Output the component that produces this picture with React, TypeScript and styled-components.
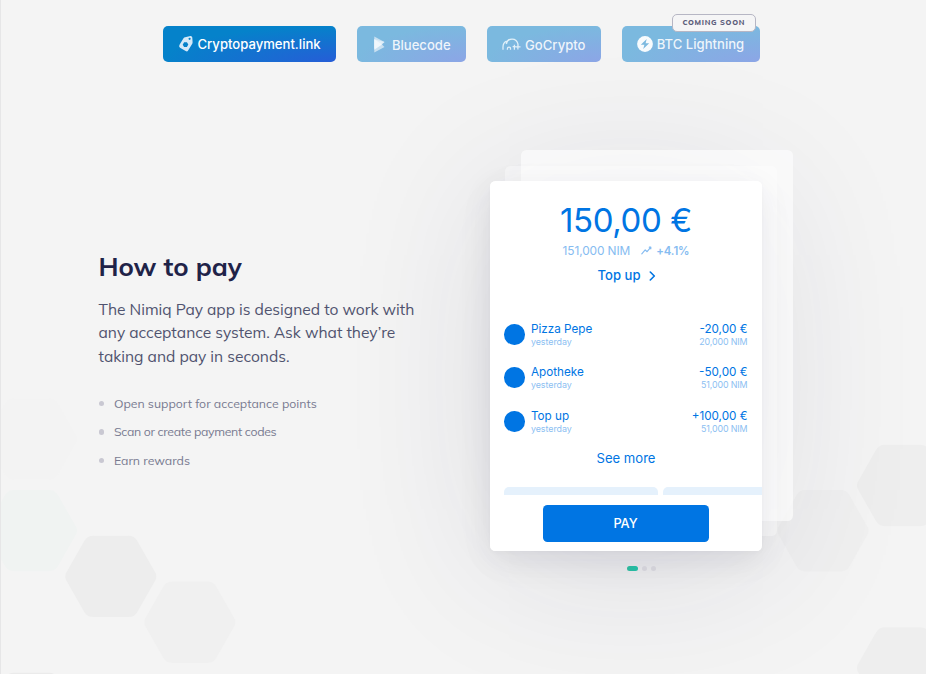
import React from 'react';
import styled, { createGlobalStyle, css } from 'styled-components';

const GlobalStyle = createGlobalStyle`
  *, *::before, *::after { box-sizing: border-box; }
  body { margin: 0; background: #f4f4f4; }
  h1, p, ul { margin: 0; padding: 0; }
  button { border: 0; padding: 0; font-family: inherit; background: none; }
`;

const Page = styled.div`
  position: relative;
  width: 926px;
  height: 674px;
  overflow: hidden;
  border-left: 1px solid #e6e6e7;
  background: #f4f4f4;
  font-family: Inter, sans-serif;
`;

const Backdrop = styled.svg`
  position: absolute;
  inset: 0 auto auto -1px;
  pointer-events: none;
`;

const MethodBar = styled.nav`
  position: relative;
  z-index: 1;
  display: flex;
  gap: 20.7px;
  padding: 25.7px 0 0 161.5px;
`;

const Method = styled.button<{ $width: number; $active?: boolean; $inset?: number; $lift?: number }>`
  position: relative;
  display: flex;
  flex: none;
  align-items: center;
  width: ${p => p.$width}px;
  height: 36.3px;
  padding: ${p => p.$lift ?? 0}px 0 0 ${p => p.$inset ?? 15}px;
  border-radius: 5px;
  color: ${p => (p.$active ? '#fff' : 'rgba(255,255,255,.88)')};
  background: ${p =>
    p.$active
      ? 'radial-gradient(100% 100% at 100% 100%, #265dd7 0%, #0582ca 100%)'
      : 'radial-gradient(100% 100% at 100% 100%, #8ca5e6 0%, #7bb9df 100%)'};
  font-size: 13.1px;
  font-weight: 500;
  white-space: nowrap;
`;

const Glyph = styled.svg<{ $gap: number }>`
  flex: none;
  margin-right: ${p => p.$gap}px;
`;

const SoonBadge = styled.span`
  position: absolute;
  top: -12px;
  right: 4.7px;
  display: flex;
  align-items: center;
  justify-content: center;
  width: 84px;
  height: 18.5px;
  border: 1px solid #b6b6c4;
  border-radius: 5px;
  background: #f5f5f6;
  color: #5b5d7b;
  font: 800 7.4px/1 Mulish, Lato, sans-serif;
  letter-spacing: 0.7px;
`;

const Main = styled.main`
  position: relative;
  display: flex;
  align-items: flex-start;
`;

const Copy = styled.section`
  width: 488.5px;
  padding: 186px 0 0 97.5px;
  font-family: Mulish, Lato, sans-serif;
  white-space: nowrap;
`;

const Title = styled.h1`
  color: #1f2348;
  font-size: 25.9px;
  line-height: 36px;
  font-weight: 700;
`;

const Lead = styled.p`
  margin-top: 14px;
  color: #50536f;
  font-size: 15.57px;
  line-height: 23.5px;
`;

const Line = styled.span`
  display: block;
`;

const Points = styled.ul`
  display: flex;
  flex-direction: column;
  gap: 10.5px;
  margin-top: 25.9px;
  list-style: none;
`;

const Point = styled.li<{ $spacing?: number }>`
  display: flex;
  align-items: center;
  gap: 10px;
  height: 18px;
  color: #797b91;
  font-size: 12.3px;
  letter-spacing: ${p => p.$spacing ?? 0}px;

  &::before {
    content: '';
    width: 5.4px;
    height: 5.4px;
    border-radius: 50%;
    background: #c9c8d2;
  }
`;

const Showcase = styled.section`
  flex: none;
  width: 305px;
  padding-top: 88.2px;
`;

const Stack = styled.div`
  display: grid;
  width: 304px;
  height: 400.5px;
`;

const sheet = css`
  grid-area: 1 / 1;
  width: 272px;
  height: 369.5px;
  border-radius: 5.5px;
`;

const Glow = styled.div`
  ${sheet}
  margin-top: 31px;
  box-shadow:
    0 10px 50px rgba(31, 35, 72, 0.03),
    4px 12px 155px rgba(31, 35, 72, 0.12);
`;

const BackSheet = styled.div<{ $depth: number }>`
  ${sheet}
  height: 370.5px;
  margin: ${p => 31 - 15.5 * p.$depth}px 0 0 ${p => 15.6 * p.$depth}px;
  background: rgba(255, 255, 255, ${p => (p.$depth === 2 ? 0.6 : 0.4)});
`;

const Wallet = styled.article`
  ${sheet}
  position: relative;
  display: flex;
  flex-direction: column;
  align-items: center;
  margin-top: 31px;
  padding: 20px 0 0 1px;
  overflow: hidden;
  background: #fff;
  color: #0075e3;
  white-space: nowrap;
`;

const Shade = styled.div`
  ${sheet}
  margin-top: 31px;
  box-shadow:
    0 2px 5px rgba(31, 35, 72, 0.02),
    0 8px 32px rgba(31, 35, 72, 0.07);
`;

const Balance = styled.div`
  font-size: 33px;
  line-height: 38px;
  letter-spacing: -0.4px;
`;

const Rate = styled.div`
  display: flex;
  align-items: center;
  margin-top: 3.5px;
  height: 16px;
  color: #86bcf1;
  font-size: 11.9px;
  letter-spacing: -0.1px;

  svg { margin: 0 4px 0 11px; }
  strong { font-size: 11.4px; font-weight: 600; }
`;

const TopUp = styled.button`
  display: flex;
  align-items: center;
  gap: 8px;
  margin: 7.5px 0 0 1px;
  height: 18px;
  color: inherit;
  font-size: 13.1px;
  font-weight: 500;

  svg { margin-top: 2px; }
`;

const Transactions = styled.div`
  display: flex;
  flex-direction: column;
  gap: 16.5px;
  width: 100%;
  margin-top: 37.3px;
  padding: 0 14px 0 13.7px;
`;

const Transaction = styled.div`
  display: grid;
  grid-template-columns: 20.6px 1fr auto;
  align-items: center;
  column-gap: 6.2px;
  height: 27px;
`;

const Avatar = styled.span`
  width: 20.6px;
  height: 20.6px;
  margin-top: -1.4px;
  border-radius: 50%;
  background: #0075e3;
`;

const Detail = styled.div<{ $end?: boolean }>`
  font-size: 11.7px;
  line-height: 14px;
  text-align: ${p => (p.$end ? 'right' : 'left')};

  small {
    display: block;
    color: #8cc0f2;
    font-size: 8.9px;
    line-height: 12px;
    letter-spacing: ${p => (p.$end ? -0.13 : -0.05)}px;
  }
`;

const SeeMore = styled.button`
  margin-top: 13.7px;
  height: 18px;
  color: inherit;
  font-size: 13.1px;
`;

const Tiles = styled.div`
  display: flex;
  gap: 5.5px;
  align-self: stretch;
  height: 7.5px;
  margin-top: 20.2px;
  padding-left: 13.8px;

  span {
    flex: 0 0 153.5px;
    border-radius: 5px 5px 0 0;
    background: #e5f1fc;
  }
`;

const Pay = styled.button`
  width: 166px;
  height: 36.5px;
  margin: 10.5px 1px 0 0;
  border-radius: 4.5px;
  background: #0075e3;
  color: #fff;
  font-size: 12.8px;
  font-weight: 500;
`;

const Pager = styled.div`
  position: relative;
  display: flex;
  justify-content: center;
  gap: 4px;
  width: 272px;
  margin: 15.3px 0 0 15.5px;
`;

const Dot = styled.span<{ $active?: boolean }>`
  width: ${p => (p.$active ? 11 : 5)}px;
  height: 5.3px;
  border-radius: 3px;
  background: ${p => (p.$active ? 'linear-gradient(90deg, #2fb69b, #21bca5)' : '#d2d1d8')};
`;

const HEX =
  'M-45 -3 L-26.5 -35.5 Q-23.5 -40.7 -17.5 -40.7 H17.5 Q23.5 -40.7 26.5 -35.5 L45 -3 Q46 0 45 3 L26.5 35.5 Q23.5 40.7 17.5 40.7 H-17.5 Q-23.5 40.7 -26.5 35.5 L-45 3 Q-46 0 -45 -3 Z';

const hexagons = [
  { x: 31.5, y: 439, fill: '#f3f3f3' },
  { x: 31.5, y: 530.6, fill: '#f0f3f2' },
  { x: 110.8, y: 576.4, fill: '#ededed' },
  { x: 189.8, y: 622.2, fill: '#f0f0f0' },
  { x: 31.5, y: 713.5, fill: '#ebebeb' },
  { x: 823, y: 530.8, fill: '#f0f0f0' },
  { x: 902.5, y: 485.5, fill: '#eeeeee' },
  { x: 902.5, y: 668, fill: '#eeeeee' },
];

const TagIcon = () => (
  <Glyph $gap={4} width="16" height="18" viewBox="0 0 16 18">
    <path
      fill="#d5e9f8"
      fillRule="evenodd"
      d="M7.1 2.3 12.4 1.1Q14 .9 14.3 2.6L14.6 7.3Q14.6 8.2 14.1 9L10.1 15.6Q9.2 17 7.7 16.1L2 12.7Q.6 11.6 1.4 10.1L5.5 3.3Q6.1 2.5 7.1 2.3ZM11.6 2.7a1.1 1.1 0 1 0 0 2.2 1.1 1.1 0 0 0 0-2.2ZM6.1 7.2 4.7 9.7 6.1 12H8.9L10.3 9.6 8.9 7.2Z"
    />
  </Glyph>
);

const BluecodeIcon = () => (
  <Glyph $gap={6.5} width="11" height="17" viewBox="0 0 11 17">
    <path fill="#c9e0f1" d="M.3.5 10.5 6.1 8 8.5 10.5 11.1.3 16.5Z" />
    <path fill="#e2eff9" d="M.3 3.2 10.5 6.1.3 12.5Z" />
    <path fill="#f1f7fc" d="M.3 3.2 8 8.5.3 13.8Z" />
  </Glyph>
);

const GoCryptoIcon = () => (
  <Glyph $gap={4} width="19" height="13" viewBox="0 0 19 13" fill="none" stroke="#e1f0f9" strokeWidth="1.25">
    <path d="M1 11.8V9Q1 4.7 4.6 3.1M4.5 5.2Q5.7 1 10 1 15 1 16 6.2V8.5M5.4 11.8V10.7Q5.4 9.1 7 9.1T8.5 10.7V11.8M12.4 6.8V11.8M10.6 8.5H13.4M15.9 6.5V11.5M13.4 8.8H18.5" />
    <path d="M3.9 5.8 5.1 4.8" />
  </Glyph>
);

const LightningIcon = () => (
  <Glyph $gap={4} width="16" height="16" viewBox="0 0 16 16">
    <circle cx="8" cy="8" r="7.9" fill="#f7fbfd" />
    <path fill="#7bb9df" d="M9.7 3 3.8 8.8H7.4L6.2 13.1 12.2 7.3H8.6Z" />
  </Glyph>
);

const transactions = [
  { name: 'Pizza Pepe', amount: '-20,00 €', nim: '20,000 NIM' },
  { name: 'Apotheke', amount: '-50,00 €', nim: '51,000 NIM' },
  { name: 'Top up', amount: '+100,00 €', nim: '51,000 NIM' },
];

export default function App() {
  return (
    <Page>
      <GlobalStyle />
      <Backdrop width="926" height="674" viewBox="0 0 926 674">
        {hexagons.map(h => (
          <path key={`${h.x}-${h.y}`} d={HEX} fill={h.fill} transform={`translate(${h.x} ${h.y})`} />
        ))}
      </Backdrop>

      <MethodBar>
        <Method $width={173.7} $active>
          <TagIcon />
          Cryptopayment.link
        </Method>
        <Method $width={109.5} $inset={17.5} $lift={2}>
          <BluecodeIcon />
          Bluecode
        </Method>
        <Method $width={114} $lift={2}>
          <GoCryptoIcon />
          GoCrypto
        </Method>
        <Method $width={138.7}>
          <LightningIcon />
          BTC Lightning
          <SoonBadge>COMING SOON</SoonBadge>
        </Method>
      </MethodBar>

      <Main>
        <Copy>
          <Title>How to pay</Title>
          <Lead>
            <Line>The Nimiq Pay app is designed to work with</Line>
            <Line>any acceptance system. Ask what they’re</Line>
            <Line>taking and pay in seconds.</Line>
          </Lead>
          <Points>
            <Point>Open support for acceptance points</Point>
            <Point $spacing={-0.32}>Scan or create payment codes</Point>
            <Point>Earn rewards</Point>
          </Points>
        </Copy>

        <Showcase>
          <Stack>
            <Glow />
            <BackSheet $depth={2} />
            <BackSheet $depth={1} />
            <Shade />
            <Wallet>
              <Balance>150,00 €</Balance>
              <Rate>
                151,000 NIM
                <svg width="11" height="9" viewBox="0 0 11 9" fill="none" stroke="currentColor" strokeWidth="1.2" strokeLinecap="round" strokeLinejoin="round">
                  <path d="M.8 7.8 4.2 3.9 6.1 5.7 9.8 1.2M8.3 1.2H9.8V2.8" />
                </svg>
                <strong>+4.1%</strong>
              </Rate>
              <TopUp>
                Top up
                <svg width="7" height="10" viewBox="0 0 7 10" fill="none" stroke="currentColor" strokeWidth="1.6" strokeLinecap="round" strokeLinejoin="round">
                  <path d="M1.3 1 5.3 5 1.3 9" />
                </svg>
              </TopUp>
              <Transactions>
                {transactions.map(t => (
                  <Transaction key={t.name}>
                    <Avatar />
                    <Detail>
                      {t.name}
                      <small>yesterday</small>
                    </Detail>
                    <Detail $end>
                      {t.amount}
                      <small>{t.nim}</small>
                    </Detail>
                  </Transaction>
                ))}
              </Transactions>
              <SeeMore>See more</SeeMore>
              <Tiles>
                <span />
                <span />
              </Tiles>
              <Pay>PAY</Pay>
            </Wallet>
          </Stack>
          <Pager>
            <Dot $active />
            <Dot />
            <Dot />
          </Pager>
        </Showcase>
      </Main>
    </Page>
  );
}
